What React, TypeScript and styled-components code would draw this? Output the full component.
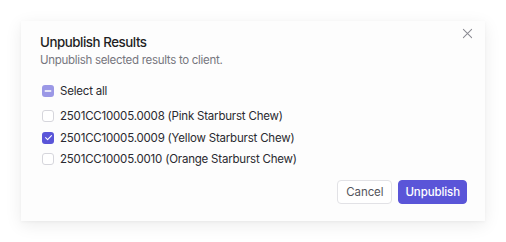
import styled, { createGlobalStyle } from 'styled-components';
import React from 'react';

const Global = createGlobalStyle`
  html, body {
    margin: 0;
    padding: 0;
    background: #ffffff;
    font-family: Inter, "Noto Sans", sans-serif;
  }
`;

export const Page = styled.div`
  width: 506px;
  height: 242px;
  padding: 21px;
  box-sizing: border-box;
`;

export const Dialog = styled.div`
  position: relative;
  width: 464px;
  height: 200px;
  box-sizing: border-box;
  background: #fdfdfd;
  box-shadow: 0 4px 16px rgba(0, 0, 0, 0.08), 0 1px 3px rgba(0, 0, 0, 0.04);
  padding: 12px 18px 17px 19px;
  display: flex;
  flex-direction: column;
`;

export const Close = styled.button`
  position: absolute;
  top: 3px;
  right: 9px;
  width: 18px;
  height: 18px;
  padding: 0;
  border: none;
  background: none;
  display: flex;
  align-items: center;
  justify-content: center;
  color: #8a8a92;
`;

export const Title = styled.h2`
  margin: 0;
  font-size: 13.3px;
  font-weight: 500;
  letter-spacing: -0.45px;
  color: #1f1f24;
  line-height: 18px;
`;

export const Subtitle = styled.p`
  margin: 0;
  font-size: 11.5px;
  letter-spacing: -0.3px;
  color: #76767e;
  line-height: 18px;
`;

export const List = styled.div`
  margin-top: 11px;
  display: flex;
  flex-direction: column;
`;

export const Row = styled.label<{ $first?: boolean }>`
  display: flex;
  align-items: center;
  gap: 6px;
  height: 21.5px;
  font-size: 11.5px;
  letter-spacing: -0.2px;
  color: #2a2a30;
  margin-bottom: ${(p) => (p.$first ? '4px' : '0')};
`;

export const Box = styled.span<{ $state: 'on' | 'off' | 'mixed' }>`
  width: 12px;
  height: 12px;
  margin-left: 2px;
  border-radius: 3px;
  box-sizing: border-box;
  display: flex;
  align-items: center;
  justify-content: center;
  background: ${(p) =>
    p.$state === 'on' ? '#5a55d8' : p.$state === 'mixed' ? '#9b98e6' : '#ffffff'};
  border: ${(p) => (p.$state === 'off' ? '1px solid #d6d6dc' : 'none')};
`;

export const Footer = styled.div`
  margin-top: auto;
  display: flex;
  justify-content: flex-end;
  gap: 6px;
`;

export const Button = styled.button<{ $primary?: boolean }>`
  height: 24px;
  padding: 0 ${(p) => (p.$primary ? '6px' : '8px')};
  border-radius: 4px;
  font-family: Inter, sans-serif;
  font-size: 11.5px;
  letter-spacing: -0.1px;
  font-weight: ${(p) => (p.$primary ? 500 : 400)};
  background: ${(p) => (p.$primary ? '#5a55d8' : '#ffffff')};
  color: ${(p) => (p.$primary ? '#ffffff' : '#55555c')};
  border: 1px solid ${(p) => (p.$primary ? '#5a55d8' : '#e2e2e6')};
`;

const items = [
  { label: '2501CC10005.0008 (Pink Starburst Chew)', checked: false },
  { label: '2501CC10005.0009 (Yellow Starburst Chew)', checked: true },
  { label: '2501CC10005.0010 (Orange Starburst Chew)', checked: false },
];

function Mark({ state }: { state: 'on' | 'off' | 'mixed' }) {
  return (
    <Box $state={state}>
      {state === 'on' && (
        <svg width="9" height="9" viewBox="0 0 10 10" fill="none">
          <path d="M1.8 5.2 L4 7.3 L8.3 2.8" stroke="#fff" strokeWidth="1.2" strokeLinecap="round" strokeLinejoin="round" />
        </svg>
      )}
      {state === 'mixed' && (
        <svg width="8" height="8" viewBox="0 0 10 10">
          <path d="M1.5 5 H8.5" stroke="#fff" strokeWidth="1.6" strokeLinecap="round" />
        </svg>
      )}
    </Box>
  );
}

export default function App() {
  return (
    <Page>
      <Global />
      <Dialog>
        <Close aria-label="Close">
          <svg width="11" height="11" viewBox="0 0 12 12" fill="none">
            <path d="M1.5 1.5 L10.5 10.5 M10.5 1.5 L1.5 10.5" stroke="currentColor" strokeWidth="1.1" strokeLinecap="round" />
          </svg>
        </Close>
        <Title>Unpublish Results</Title>
        <Subtitle>Unpublish selected results to client.</Subtitle>
        <List>
          <Row $first>
            <Mark state="mixed" />
            Select all
          </Row>
          {items.map((it) => (
            <Row key={it.label}>
              <Mark state={it.checked ? 'on' : 'off'} />
              {it.label}
            </Row>
          ))}
        </List>
        <Footer>
          <Button>Cancel</Button>
          <Button $primary>Unpublish</Button>
        </Footer>
      </Dialog>
    </Page>
  );
}
